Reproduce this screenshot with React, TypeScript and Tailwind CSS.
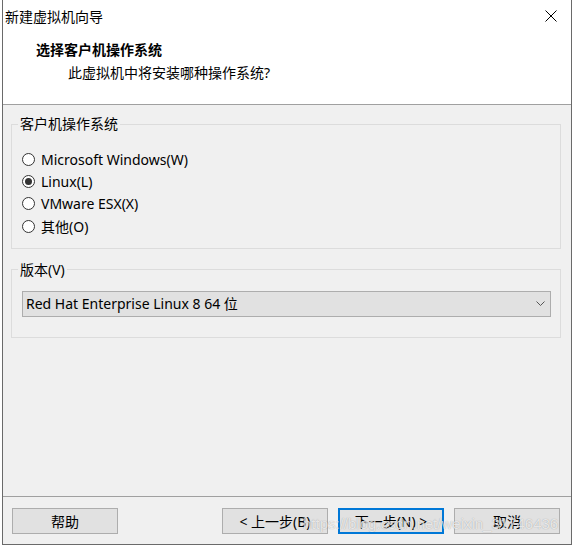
import React from "react";

const FONT = "font-['Microsoft_YaHei_UI','Noto_Sans','Noto_Sans_CJK_SC',sans-serif]";

const OS_OPTIONS = [
  { id: "win", label: "Microsoft Windows(W)" },
  { id: "linux", label: "Linux(L)" },
  { id: "esx", label: "VMware ESX(X)" },
  { id: "other", label: "其他(O)" },
];

function Radio({ checked }: { checked?: boolean }) {
  return (
    <span className="flex h-[13px] w-[13px] shrink-0 items-center justify-center rounded-full border border-[#333] bg-white">
      {checked ? <span className="h-[7px] w-[7px] rounded-full bg-[#333]" /> : null}
    </span>
  );
}

function WinButton({
  children,
  primary,
}: {
  children: React.ReactNode;
  primary?: boolean;
}) {
  return (
    <button
      className={`flex h-[26px] w-[106px] items-center justify-center bg-[#e1e1e1] text-[14px] whitespace-nowrap text-black ${
        primary ? "border-2 border-[#0078d7]" : "border border-[#adadad]"
      }`}
    >
      {children}
    </button>
  );
}

export default function App() {
  const selected = "linux";

  return (
    <div className={`h-[547px] w-[574px] bg-white ${FONT}`}>
      <div className="ml-[2px] flex h-[545px] w-[570px] flex-col border-x border-b border-x-[#6a6a6a] border-b-[#6a6a6a] bg-[#f0f0f0]">
        {/* 标题栏 + 页头 */}
        <div className="h-[105px] shrink-0 border-b border-[#a0a0a0] bg-white">
          <div className="flex h-[32px] items-center justify-between pl-[2px] pr-[14px]">
            <span className="text-[14px] text-black">新建虚拟机向导</span>
            <svg width="12" height="12" viewBox="0 0 12 12" className="text-black">
              <path d="M0.5 0.5 L11.5 11.5 M11.5 0.5 L0.5 11.5" stroke="currentColor" strokeWidth="1" />
            </svg>
          </div>
          <p className="mt-[8px] pl-[33px] text-[14px] font-bold leading-[20px] text-black">
            选择客户机操作系统
          </p>
          <p className="mt-[3px] pl-[65px] text-[14px] leading-[20px] text-black">
            此虚拟机中将安装哪种操作系统?
          </p>
        </div>

        {/* 内容 */}
        <div className="flex-1 pt-[9px]">
          <fieldset className="ml-[8px] w-[550px] border border-[#dcdcdc] pb-[10px]">
            <legend className="ml-[6px] px-[2px] text-[14px] leading-[20px] text-black">
              客户机操作系统
            </legend>
            <div className="pl-[10px] pt-[14px]">
              {OS_OPTIONS.map((o) => (
                <label key={o.id} className="flex h-[22.4px] items-center gap-[6px] text-[14px] text-black">
                  <Radio checked={o.id === selected} />
                  <span>{o.label}</span>
                </label>
              ))}
            </div>
          </fieldset>

          <fieldset className="ml-[8px] mt-[11px] w-[550px] border border-[#dcdcdc] pb-[20px]">
            <legend className="ml-[6px] px-[2px] text-[14px] leading-[20px] text-black">
              版本(V)
            </legend>
            <div className="ml-[10px] mt-[11px] flex h-[26px] w-[529px] items-center justify-between border border-[#adadad] bg-[#e1e1e1] pl-[3px] pr-[5px] text-[14px] text-black">
              <span>Red Hat Enterprise Linux 8 64 位</span>
              <svg width="9" height="5" viewBox="0 0 9 5">
                <path d="M0.5 0.5 L4.5 4.5 L8.5 0.5" fill="none" stroke="#555" strokeWidth="1" />
              </svg>
            </div>
          </fieldset>
        </div>

        {/* 底部按钮 */}
        <div className="relative h-[48px] shrink-0 border-t border-[#a0a0a0]">
          <div className="flex items-center pl-[9px] pr-[11px] pt-[11px]">
            <WinButton>帮助</WinButton>
            <div className="ml-auto flex gap-[10px]">
              <WinButton>&lt; 上一步(B)</WinButton>
              <WinButton primary>下一步(N) &gt;</WinButton>
              <WinButton>取消</WinButton>
            </div>
          </div>
          <span className="pointer-events-none absolute left-[300px] top-[16px] font-['Liberation_Sans',sans-serif] text-[15px] whitespace-nowrap text-white/75 [text-shadow:0_0_1px_rgba(0,0,0,0.35)]">
            https://blog.csdn.net/weixin_31746436
          </span>
        </div>
      </div>
    </div>
  );
}
